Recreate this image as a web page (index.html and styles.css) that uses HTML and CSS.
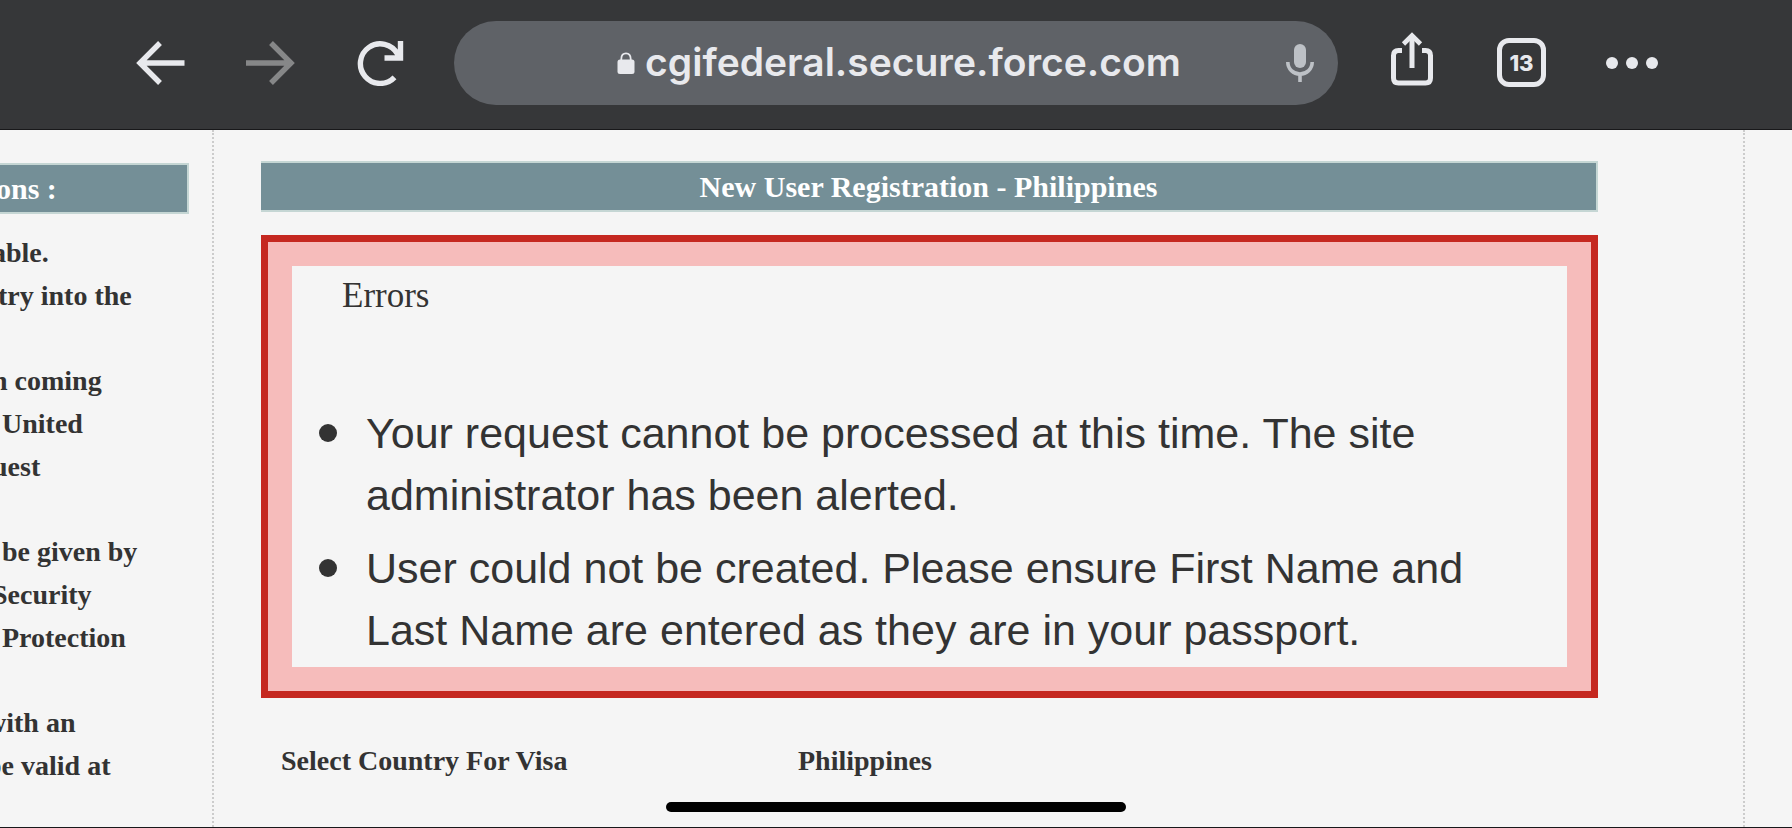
FILE: index.html
```html
<!DOCTYPE html>
<html lang="en">
<head>
<meta charset="utf-8">
<meta name="viewport" content="width=device-width, initial-scale=1">
<title>New User Registration</title>
<link rel="stylesheet" href="styles.css">
</head>
<body>
<header class="toolbar">
  <nav class="nav-buttons" aria-label="History">
    <button class="icon-button" type="button" aria-label="Back">
      <svg width="50" height="46" viewBox="0 0 50 46" fill="none" stroke="currentColor" stroke-width="5.400"><path d="M48.500 23H5M24 3L4 23L24 43"/></svg>
    </button>
    <button class="icon-button" type="button" aria-label="Forward" disabled>
      <svg width="50" height="46" viewBox="0 0 50 46" fill="none" stroke="currentColor" stroke-width="5.400"><path d="M0 23H44M25 3L45 23L25 43"/></svg>
    </button>
    <button class="icon-button" type="button" aria-label="Reload">
      <svg width="50" height="46" viewBox="0 0 50 46" fill="none" stroke="currentColor" stroke-width="5.400"><path d="M38.500 37.300A19.800 19.800 0 1 1 41.500 14L44.500 18M44.500 1V18H28.500"/></svg>
    </button>
  </nav>
  <div class="address">
    <label class="address-site">
      <svg width="18" height="22" viewBox="0 0 18 22" fill="none" aria-hidden="true"><rect x="0.500" y="7.500" width="17" height="14.500" rx="2.500" fill="currentColor"/><path d="M4.300 9V7C4.300 3 6.200 1.300 9 1.300S13.700 3 13.700 7V9" stroke="currentColor" stroke-width="1.800"/></svg>
      <input class="address-input" type="text" aria-label="Address" value="cgifederal.secure.force.com">
    </label>
    <button class="icon-button mic" type="button" aria-label="Voice search">
      <svg width="28" height="38" viewBox="0 0 28 38" fill="none"><rect x="8" y="0" width="12" height="24" rx="6" fill="currentColor"/><path d="M1.800 18C1.800 25 7.200 30 14 30S26.200 25 26.200 18M14 30V38" stroke="currentColor" stroke-width="3.600"/></svg>
    </button>
  </div>
  <div class="actions">
    <button class="icon-button" type="button" aria-label="Share">
      <svg width="48" height="64" viewBox="0 0 48 64" fill="none" stroke="currentColor" stroke-width="5"><path d="M13 19.500H9.500Q4.500 19.500 4.500 24.500V47Q4.500 52 9.500 52H36.500Q41.500 52 41.500 47V24.500Q41.500 19.500 36.500 19.500H33M23 37V5"/><path d="M14.500 13L23 4.500L31.500 13" stroke-width="4.600"/></svg>
    </button>
    <button class="tab-count" type="button" aria-label="Tabs">13</button>
    <button class="icon-button" type="button" aria-label="More">
      <svg width="52" height="14" viewBox="0 0 52 14" fill="currentColor"><circle cx="6" cy="7" r="6"/><circle cx="26" cy="7" r="6"/><circle cx="46" cy="7" r="6"/></svg>
    </button>
  </div>
</header>

<div class="page">
  <aside class="sidebar">
    <h2 class="banner banner-side"><span class="cut-s">ons :</span></h2>
    <div class="notes">
      <p><span class="cut-m">able.</span><span class="cut-s">try into the</span></p>
      <p><span class="cut-m">n coming</span><span>United</span><span class="cut-m">uest</span></p>
      <p><span>be given by</span><span class="cut-m">Security</span><span>Protection</span></p>
      <p><span class="cut-l">with an</span><span class="cut-l">be valid at</span></p>
    </div>
  </aside>
  <main class="content">
    <h1 class="banner">New User Registration - Philippines</h1>
    <section class="errors" role="alert">
      <div class="errors-body">
        <h2 class="errors-title">Errors</h2>
        <ul class="errors-list">
          <li>Your request cannot be processed at this time. The site<br>administrator has been alerted.</li>
          <li>User could not be created. Please ensure First Name and<br>Last Name are entered as they are in your passport.</li>
        </ul>
      </div>
    </section>
    <dl class="field">
      <dt>Select Country For Visa</dt>
      <dd>Philippines</dd>
    </dl>
  </main>
</div>
<div class="home-indicator"></div>
</body>
</html>
```
FILE: styles.css
```css
* {
  box-sizing: border-box;
}

body {
  margin: 0;
  min-height: 100vh;
  display: flex;
  flex-direction: column;
  overflow-x: hidden;
  background: #f5f5f5;
  color: #333;
  border-bottom: 1px solid #18181a;
  font-family: "Liberation Serif", "Times New Roman", serif;
}

h1, h2, p, ul, dl, dd {
  margin: 0;
  padding: 0;
}

button, input {
  border: 0;
  padding: 0;
  background: none;
  color: inherit;
  font: inherit;
}

svg {
  display: block;
}

/* Browser toolbar */
.toolbar {
  display: flex;
  align-items: center;
  gap: 48px;
  height: 130px;
  padding: 0 134px 4px 136px;
  background: #363739;
  border-bottom: 1px solid #18181a;
  color: #e8e9ed;
  font-family: Inter, Roboto, sans-serif;
}

.nav-buttons {
  display: flex;
  gap: 60px;
}

.icon-button:disabled {
  color: #868788;
}

.address {
  flex: 1;
  display: grid;
  grid-template-columns: 1fr auto 1fr;
  align-items: center;
  height: 84px;
  padding: 0 24px;
  border-radius: 42px;
  background: #5f6267;
}

.address-site {
  grid-column: 2;
  display: flex;
  align-items: center;
  gap: 10px;
  padding-left: 6px;
}

.address-input {
  field-sizing: content;
  height: 52px;
  padding-bottom: 2px;
  font-size: 39px;
  font-weight: 600;
  line-height: 50px;
}

.mic {
  justify-self: end;
  color: #bdc1c6;
}

.actions {
  display: flex;
  align-items: center;
  gap: 60px;
  padding-left: 3px;
}

.tab-count {
  width: 49px;
  height: 49px;
  border: 5px solid currentColor;
  border-radius: 12px;
  font-size: 22px;
  font-weight: 800;
}

/* Page */
.page {
  flex: 1;
  display: grid;
  grid-template-columns: 212px 1fr;
  padding-right: 47px;
}

.sidebar {
  padding: 33px 23px 0 0;
  overflow: hidden;
}

.banner {
  height: 51px;
  border: 2px solid #c5d6d4;
  border-left: 0;
  background: #748f97;
  color: #fff;
  font-size: 30px;
  font-weight: bold;
  line-height: 48px;
  text-align: center;
}

.banner-side {
  text-align: left;
}

.notes {
  display: flex;
  flex-direction: column;
  gap: 42px;
  padding: 17px 0 0 2px;
  font-size: 28px;
  font-weight: bold;
  line-height: 43px;
}

.notes span,
.banner-side span {
  display: block;
  white-space: nowrap;
}

.cut-s {
  margin-left: -4px;
}

.cut-m {
  margin-left: -10px;
}

.cut-l {
  margin-left: -16px;
}

.content {
  padding: 31px 145px 0 47px;
  border: 2px dotted #ccc;
  border-width: 0 2px;
}

.errors {
  margin-top: 23px;
  padding: 24px;
  border: 7px solid #c52820;
  background: #f6bcbb;
}

.errors-body {
  padding: 8px 0 6px;
  background: #f5f5f5;
}

.errors-title {
  padding-left: 50px;
  font-size: 35px;
  font-weight: normal;
  line-height: 43px;
}

.errors-list {
  display: flex;
  flex-direction: column;
  gap: 11px;
  padding: 85px 0 0 74px;
  list-style: none;
  font-family: "Liberation Sans", Arial, sans-serif;
  font-size: 43px;
  line-height: 62px;
}

.errors-list li::before {
  content: "";
  float: left;
  width: 18px;
  height: 18px;
  margin: 22px 0 0 -47px;
  border-radius: 50%;
  background: #333;
}

.field {
  display: grid;
  grid-template-columns: 517px 1fr;
  padding: 47px 0 0 20px;
  font-size: 28px;
  font-weight: bold;
  line-height: 32px;
}

.home-indicator {
  position: absolute;
  left: 50%;
  bottom: 16px;
  width: 460px;
  height: 10px;
  margin-left: -230px;
  border-radius: 5px;
  background: #000;
}
```
